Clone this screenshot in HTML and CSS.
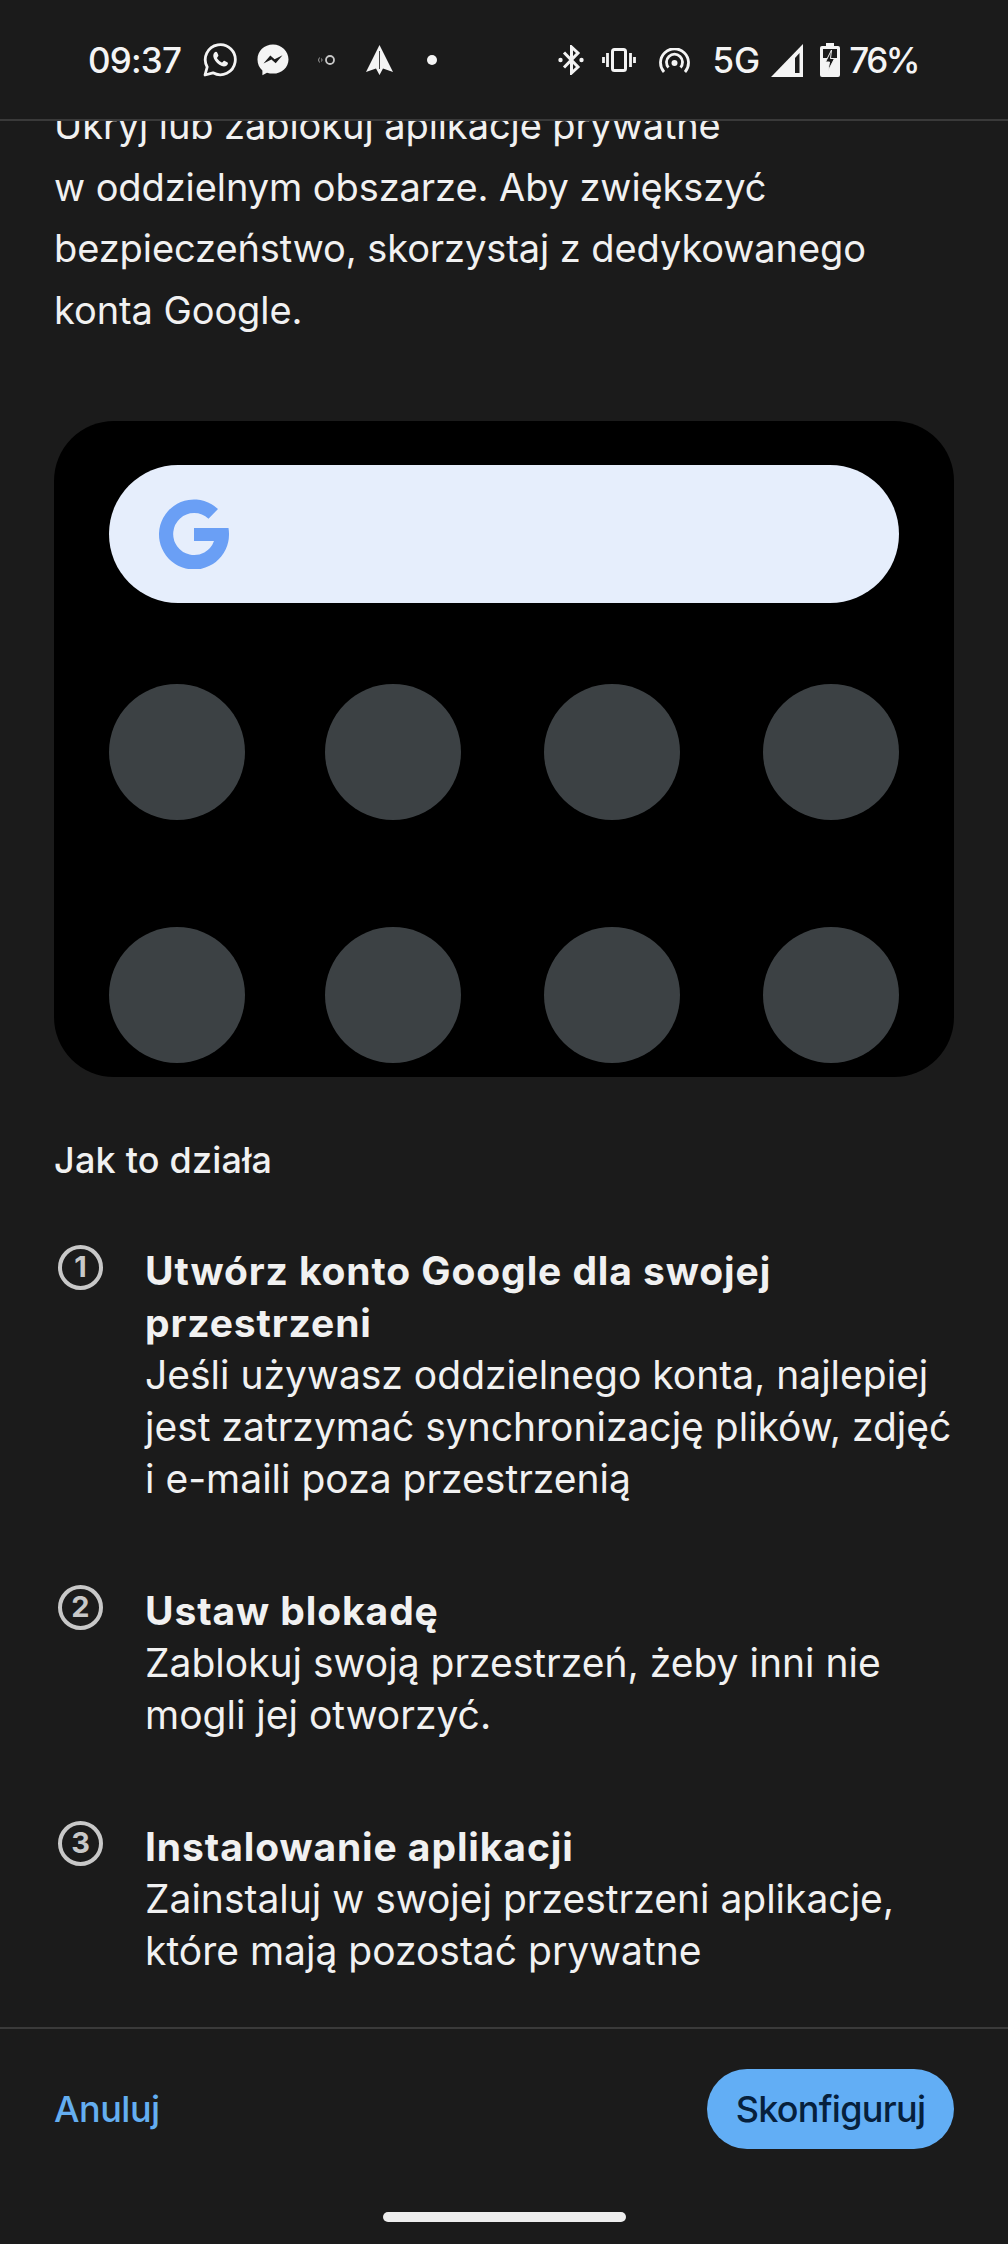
FILE: index.html
```html
<!DOCTYPE html>
<html lang="pl">
<head>
<meta charset="utf-8">
<title>Przestrzeń prywatna</title>
<link rel="stylesheet" href="styles.css">
</head>
<body>
<div class="phone">
  <header class="status">
    <div class="status-left">
      <span class="clock">09:37</span>
      <svg class="ic ic-wa" viewBox="0 0 34 34"><path d="M2 32l2.2-8A15 15 0 1 1 10 29.8z" fill="none" stroke="#f4f4f4" stroke-width="2.8" stroke-linejoin="round"/><path d="M11.5 9.5c1-1 2.2-1 2.8.2l1 2.3c.3.7 0 1.300-.9 2.200-.5.500-.4 1 0 1.600a11 11 0 0 0 4 3.500c.6.300 1 .2 1.400-.3.800-1 1.200-1.400 2-1l2.500 1.200c.8.400.8 1.300.3 2.300-1 1.800-3.400 2.400-5.800 1.500a15 15 0 0 1-7.800-7.300c-1.200-2.600-.9-4.700.5-6.200z" fill="#f4f4f4"/></svg>
      <svg class="ic ic-ms" viewBox="0 0 32 32"><path d="M16 0.500C7.200.5.500 6.900.5 15.400c0 4.500 1.800 8.300 4.900 11v4.800l4.600-2.500c1.900.6 3.900.9 6 .9 8.800 0 15.500-6.500 15.500-14.200S24.800.5 16 .5z" fill="#f4f4f4"/><path d="M6.500 19.500l6.800-8 4.300 3.700 7.900-4-6.800 8-4.300-3.700z" fill="#1b1b1b"/></svg>
      <svg class="ic ic-sm" viewBox="0 0 18 12"><path d="M1.500 3.500a4 4 0 0 0 0 5M3.500 4.500a2.500 2.500 0 0 1 0 3" fill="none" stroke="#9a9a9a" stroke-width="1"/><circle cx="12" cy="6" r="4" fill="none" stroke="#c8c8c8" stroke-width="1.800"/></svg>
      <svg class="ic ic-nav" viewBox="0 0 27 30"><path d="M13.500 0L27 27l-10-3.500-3.500 6.500-3.500-6.500L0 27z" fill="#f4f4f4"/><path d="M13.500 6v18" stroke="#1b1b1b" stroke-width="0.800"/></svg>
      <span class="dot"></span>
    </div>
    <div class="status-right">
      <svg class="ic ic-bt" viewBox="0 0 26 30"><path d="M6 7.500l14 14.500-6.500 6V2l6.500 6L6 22.500" fill="none" stroke="#f4f4f4" stroke-width="3"/><circle cx="2.500" cy="15" r="2.200" fill="#f4f4f4"/><circle cx="23.500" cy="15" r="2.200" fill="#f4f4f4"/></svg>
      <svg class="ic ic-vb" viewBox="0 0 34 24"><rect x="10.500" y="1.500" width="13" height="21" rx="2" fill="none" stroke="#f4f4f4" stroke-width="3"/><path d="M1.500 9v6M5.500 5v14M28.500 5v14M32.500 9v6" stroke="#f4f4f4" stroke-width="2.800"/></svg>
      <svg class="ic ic-hs" viewBox="0 0 31 25"><path d="M5 24A14 14 0 1 1 26 24M9.500 19.500A8 8 0 1 1 21.500 19.500" fill="none" stroke="#f4f4f4" stroke-width="2.800"/><circle cx="15.500" cy="15" r="3" fill="#f4f4f4"/></svg>
      <span class="net">5G</span>
      <svg class="ic ic-sg" viewBox="0 0 32 33"><path d="M32 0v33H0z" fill="#f4f4f4"/><path d="M24 14v15h4.500V9z" fill="#1b1b1b"/></svg>
      <svg class="ic ic-bat" viewBox="0 0 20 34"><path d="M6 0h8v3h4a2 2 0 0 1 2 2v27a2 2 0 0 1-2 2H2a2 2 0 0 1-2-2V5a2 2 0 0 1 2-2h4z" fill="#f4f4f4"/><path d="M3 6h14v9H3z" fill="#1b1b1b"/><path d="M11.500 7L5.500 19h4l-1.500 9 6.500-12.500h-4z" fill="#1b1b1b" stroke="#f4f4f4" stroke-width="1"/></svg>
      <span class="pct">76%</span>
    </div>
  </header>

  <main class="content">
    <div class="scroll">
      <p class="intro">Ukryj lub zablokuj aplikacje prywatne<br>w oddzielnym obszarze. Aby zwiększyć<br>bezpieczeństwo, skorzystaj z dedykowanego<br>konta Google.</p>

      <div class="illustration">
        <div class="searchbar">
          <svg class="glogo" viewBox="0 0 70 70"><path d="M59 10A35 35 0 1 0 70 35c0-2-.2-4-.5-6H35v13h20A21 21 0 1 1 35 14a21 21 0 0 1 14.500 5.700z" fill="#6a9ff5"/></svg>
        </div>
        <div class="app-row"><span class="app"></span><span class="app"></span><span class="app"></span><span class="app"></span></div>
        <div class="app-row"><span class="app"></span><span class="app"></span><span class="app"></span><span class="app"></span></div>
      </div>

      <h2 class="how">Jak to działa</h2>

      <ol class="steps">
        <li class="step">
          <span class="num">1</span>
          <div class="step-text"><strong>Utwórz konto Google dla swojej<br>przestrzeni</strong><br>Jeśli używasz oddzielnego konta, najlepiej<br>jest zatrzymać synchronizację plików, zdjęć<br>i e-maili poza przestrzenią</div>
        </li>
        <li class="step">
          <span class="num">2</span>
          <div class="step-text"><strong>Ustaw blokadę</strong><br>Zablokuj swoją przestrzeń, żeby inni nie<br>mogli jej otworzyć.</div>
        </li>
        <li class="step">
          <span class="num">3</span>
          <div class="step-text"><strong>Instalowanie aplikacji</strong><br>Zainstaluj w swojej przestrzeni aplikacje,<br>które mają pozostać prywatne</div>
        </li>
      </ol>
    </div>
  </main>

  <footer class="footer">
    <div class="actions">
      <a class="cancel">Anuluj</a>
      <a class="primary">Skonfiguruj</a>
    </div>
    <div class="home"></div>
  </footer>
</div>
</body>
</html>
```
FILE: styles.css
```css
* { box-sizing: border-box; }
html, body { margin: 0; padding: 0; background: #1b1b1b; }
body { font-family: "Inter", "Noto Sans", sans-serif; color: #f1f1f1; }
.phone { width: 1008px; height: 2244px; display: flex; flex-direction: column; overflow: hidden; background: #1b1b1b; }

.status { height: 121px; flex: none; display: flex; justify-content: space-between; align-items: flex-start; padding: 43px 90px 0 88px; border-bottom: 2px solid #3a3a3a; position: relative; z-index: 2; background: #1b1b1b; }
.status-left, .status-right { display: flex; align-items: center; height: 34px; color: #f4f4f4; font-size: 35px; font-weight: 500; letter-spacing: -1px; }
.clock { letter-spacing: -0.8px; }
.ic { display: block; flex: none; }
.ic-wa { width: 34px; height: 34px; margin-left: 22px; }
.ic-ms { width: 32px; height: 32px; margin-left: 20px; }
.ic-sm { width: 18px; height: 12px; margin-left: 29px; }
.ic-nav { width: 27px; height: 30px; margin-left: 30px; }
.dot { width: 10px; height: 10px; border-radius: 50%; background: #f4f4f4; margin-left: 34px; }
.ic-bt { width: 26px; height: 30px; }
.ic-vb { width: 34px; height: 24px; margin-left: 18px; }
.ic-hs { width: 31px; height: 25px; margin-left: 23px; }
.net { margin-left: 22px; letter-spacing: 0; }
.ic-sg { width: 32px; height: 33px; margin-left: 11px; }
.ic-bat { width: 20px; height: 34px; margin-left: 17px; }
.pct { margin-left: 9px; letter-spacing: -2.5px; }

.content { flex: 1; min-height: 0; overflow: hidden; padding: 0 54px; }
.scroll { margin-top: -26px; }
.intro { margin: 0; font-size: 38px; line-height: 61.6px; white-space: nowrap; letter-spacing: -0.08px; }

.illustration { margin-top: 80px; height: 656px; background: #000; border-radius: 60px; padding: 44px 55px 0; }
.searchbar { height: 138px; border-radius: 69px; background: #e6eefc; display: flex; align-items: center; padding-left: 50px; }
.glogo { width: 70px; height: 70px; display: block; }
.app-row { display: flex; justify-content: space-between; margin-top: 81px; }
.app-row + .app-row { margin-top: 107px; }
.app { width: 136px; height: 136px; border-radius: 50%; background: #3c4144; }
.app:nth-child(2) { margin-left: -3px; }

.how { margin: 59px 0 0; font-size: 36px; line-height: 48px; font-weight: 500; letter-spacing: 0.2px; }

.steps { list-style: none; margin: 61px 0 0; padding: 0; display: flex; flex-direction: column; gap: 80px; }
.step { display: flex; align-items: flex-start; }
.num { flex: none; width: 45px; height: 45px; margin-left: 4px; border: 4px solid #c8c8c8; border-radius: 50%; color: #c8c8c8; font-size: 29px; font-weight: 700; line-height: 36px; text-align: center; }
.step-text { margin-left: 42px; font-size: 39px; line-height: 52px; white-space: nowrap; }
.step-text strong { font-weight: 700; letter-spacing: 0.9px; }

.footer { flex: none; height: 217px; border-top: 2px solid #3a3a3a; padding: 40px 54px 0; display: flex; flex-direction: column; }
.actions { display: flex; justify-content: space-between; align-items: center; height: 80px; }
.cancel { color: #64aef0; font-size: 36px; font-weight: 500; letter-spacing: -0.5px; }
.primary { height: 80px; width: 247px; border-radius: 40px; background: #62aef5; color: #06203c; font-size: 36px; font-weight: 500; letter-spacing: -0.7px; display: flex; align-items: center; justify-content: center; }
.home { width: 243px; height: 10px; border-radius: 5px; background: #eeeeee; margin: 63px auto 0; }
```
